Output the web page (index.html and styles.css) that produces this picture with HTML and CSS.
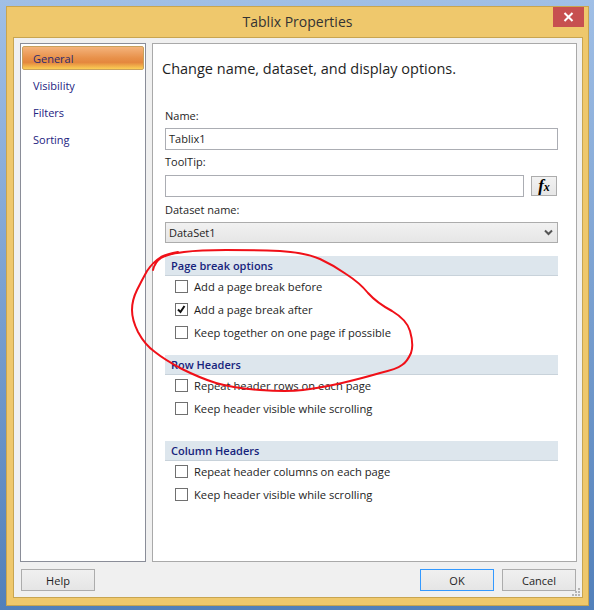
FILE: index.html
```html
<!DOCTYPE html>
<html lang="en">
<head>
    <meta charset="UTF-8">
    <title>Tablix Properties</title>
    <link rel="stylesheet" href="styles.css">
</head>
<body>
    <div class="window">
        <div class="titlebar">
            <div class="title">Tablix Properties</div>
            <div class="close">
                <svg width="11" height="10" viewBox="0 0 11 10"><path d="M1.5 1 L9.5 9 M9.5 1 L1.5 9" stroke="#fff" stroke-width="2" fill="none"/></svg>
            </div>
        </div>
        <div class="client">
            <div class="panels">
                <div class="nav">
                    <div class="nav-item active">General</div>
                    <div class="nav-item">Visibility</div>
                    <div class="nav-item">Filters</div>
                    <div class="nav-item">Sorting</div>
                </div>
                <div class="main">
                    <h1 class="heading">Change name, dataset, and display options.</h1>

                    <label class="field-label first">Name:</label>
                    <div class="input">Tablix1</div>

                    <label class="field-label">ToolTip:</label>
                    <div class="input-row">
                        <div class="input"></div>
                        <div class="fx-button">f<span class="fx-x">x</span></div>
                    </div>

                    <label class="field-label">Dataset name:</label>
                    <div class="select">
                        <span>DataSet1</span>
                        <svg width="9" height="7" viewBox="0 0 9 7"><path d="M1 1.5 L4.5 5 L8 1.5" stroke="#555" stroke-width="2" fill="none"/></svg>
                    </div>

                    <div class="section">Page break options</div>
                    <div class="check-row"><span class="checkbox"></span>Add a page break before</div>
                    <div class="check-row">
                        <span class="checkbox">
                            <svg width="11" height="11" viewBox="0 0 11 11"><path d="M2 5.5 L4.5 8 L8.5 2" stroke="#111" stroke-width="2" fill="none"/></svg>
                        </span>Add a page break after
                    </div>
                    <div class="check-row"><span class="checkbox"></span>Keep together on one page if possible</div>

                    <div class="section section-row">Row Headers</div>
                    <div class="check-row"><span class="checkbox"></span>Repeat header rows on each page</div>
                    <div class="check-row"><span class="checkbox"></span>Keep header visible while scrolling</div>

                    <div class="section section-column">Column Headers</div>
                    <div class="check-row"><span class="checkbox"></span>Repeat header columns on each page</div>
                    <div class="check-row"><span class="checkbox"></span>Keep header visible while scrolling</div>
                </div>
            </div>
            <div class="footer">
                <button class="btn">Help</button>
                <div class="footer-right">
                    <button class="btn btn-default">OK</button>
                    <button class="btn">Cancel</button>
                </div>
            </div>
            <svg class="grip" width="9" height="9" viewBox="0 0 9 9" fill="#b5b5b5">
                <rect x="6" y="0" width="2" height="2"/>
                <rect x="3" y="3" width="2" height="2"/><rect x="6" y="3" width="2" height="2"/>
                <rect x="0" y="6" width="2" height="2"/><rect x="3" y="6" width="2" height="2"/><rect x="6" y="6" width="2" height="2"/>
            </svg>
        </div>
    </div>

    <!-- red pen circle drawn over the dialog -->
    <svg class="scribble" width="594" height="610" viewBox="0 0 594 610">
        <path d="M153 270 Q155 262 161 258 Q167 254 184 252 Q200 250 226 250 Q253 250 280 251 Q307 253 320 259 Q333 265 346 274 Q360 283 368 293 Q377 303 392 311 Q407 320 410 331 Q414 345 411 353 Q407 362 402 365 Q397 369 380 373 Q363 378 342 383 Q320 388 303 390 Q287 392 260 390 Q233 388 216 383 Q200 378 182 369 Q165 360 155 352 Q145 345 138 332 Q132 320 132 310 Q132 300 137 290 Q142 280 147 271 Q153 262 161 257 Q167 254 178 252"
              fill="none" stroke="#f01018" stroke-width="2" stroke-linecap="round" stroke-linejoin="round"/>
    </svg>
</body>
</html>
```

FILE: styles.css
```css
* {
    box-sizing: border-box;
}

body {
    margin: 0;
    width: 594px;
    height: 610px;
    padding: 6px 5px 4px 6px;
    overflow: hidden;
    font-family: "Open Sans", "Noto Sans", sans-serif;
    font-size: 11px;
    color: #1e1e1e;
    background: linear-gradient(#a0bfe6, #5280ba);
}

.window {
    height: 600px;
    display: flex;
    flex-direction: column;
    background-color: #efc86c;
    border: 1px solid #c8a550;
}

.titlebar {
    height: 30px;
    flex: none;
    display: flex;
    justify-content: center;
    position: relative;
}

.title {
    font-size: 14px;
    line-height: 29px;
    color: #333;
}

.close {
    position: absolute;
    top: 0;
    right: 4px;
    width: 31px;
    height: 20px;
    background-color: #c75050;
    display: flex;
    align-items: center;
    justify-content: center;
}

.client {
    flex: 1;
    margin: 0 5px 7px 6px;
    padding: 5px 5px 0 6px;
    background-color: #f0f0f0;
    border: 1px solid #c8a550;
    position: relative;
}

.panels {
    display: flex;
    gap: 6px;
    height: 519px;
}

.nav {
    width: 126px;
    padding: 2px 1px;
    background-color: #fff;
    border: 1px solid #8a8d98;
}

.nav-item {
    height: 27px;
    line-height: 26px;
    padding-left: 11px;
    font-size: 11px;
    color: #23237f;
}

.nav-item.active {
    height: 24px;
    margin-bottom: 3px;
    line-height: 24px;
    color: #2a2a70;
    border: 1px solid #c9a15c;
    border-radius: 2px;
    padding-left: 10px;
    background: linear-gradient(#f4b37c, #e8914a 50%, #e4873e 70%, #fbcf55);
}

.main {
    flex: 1;
    padding: 0 18px 0 12px;
    background-color: #fff;
    border: 1px solid #a9a9a9;
}

.heading {
    margin: 15px 0 0 -3px;
    font-size: 14.5px;
    font-weight: 400;
    line-height: 20px;
    color: #1e1e1e;
}

.field-label {
    display: block;
    height: 15px;
    line-height: 13px;
    margin-top: 5px;
    margin-bottom: 5px;
}

.field-label.first {
    margin-top: 30px;
    margin-bottom: 4px;
}

.input-row + .field-label {
    margin-top: 6px;
    margin-bottom: 4px;
}

.input {
    height: 22px;
    line-height: 20px;
    padding-left: 3px;
    background-color: #fff;
    border: 1px solid #abadb3;
}

.input-row {
    display: flex;
    align-items: center;
    gap: 7px;
}

.input-row .input {
    width: 359px;
}

.fx-button {
    width: 26px;
    height: 20px;
    text-align: center;
    font-family: "Liberation Serif", serif;
    font-size: 17px;
    font-weight: bold;
    font-style: italic;
    line-height: 17px;
    color: #000;
    background: linear-gradient(#f2f2f2, #e6e6e6);
    border: 1px solid #acacac;
}

.fx-x {
    font-size: 12px;
}

.select {
    height: 21px;
    display: flex;
    align-items: center;
    justify-content: space-between;
    padding: 0 4px 0 3px;
    background: linear-gradient(#f1f1f1, #e6e6e6);
    border: 1px solid #acacac;
}

.section {
    height: 20px;
    margin-top: 13px;
    padding-left: 6px;
    line-height: 20px;
    font-weight: 600;
    color: #16237c;
    background-color: #dde6ed;
    border-bottom: 1px solid #c8d2da;
}

.section-row {
    margin-top: 11px;
}

.section-column {
    margin-top: 21px;
}

.check-row {
    display: flex;
    align-items: center;
    height: 23px;
    padding-left: 10px;
    font-size: 11.2px;
}

.section + .check-row {
    margin-top: -1px;
}

.checkbox {
    flex: none;
    width: 13px;
    height: 13px;
    margin-right: 6px;
    background-color: #fff;
    border: 1px solid #707070;
    display: flex;
    align-items: center;
    justify-content: center;
}

.footer {
    display: flex;
    justify-content: space-between;
    margin-top: 7px;
    padding: 0 1px;
}

.footer-right {
    display: flex;
    gap: 8px;
}

.btn {
    width: 74px;
    height: 22px;
    padding: 0;
    font: inherit;
    color: #1e1e1e;
    background: linear-gradient(#f0f0f0, #e5e5e5);
    border: 1px solid #acacac;
}

.btn-default {
    border-color: #3399ff;
}

.grip {
    position: absolute;
    right: 1px;
    bottom: 0;
}

.scribble {
    position: absolute;
    top: 0;
    left: 0;
    pointer-events: none;
}
```
